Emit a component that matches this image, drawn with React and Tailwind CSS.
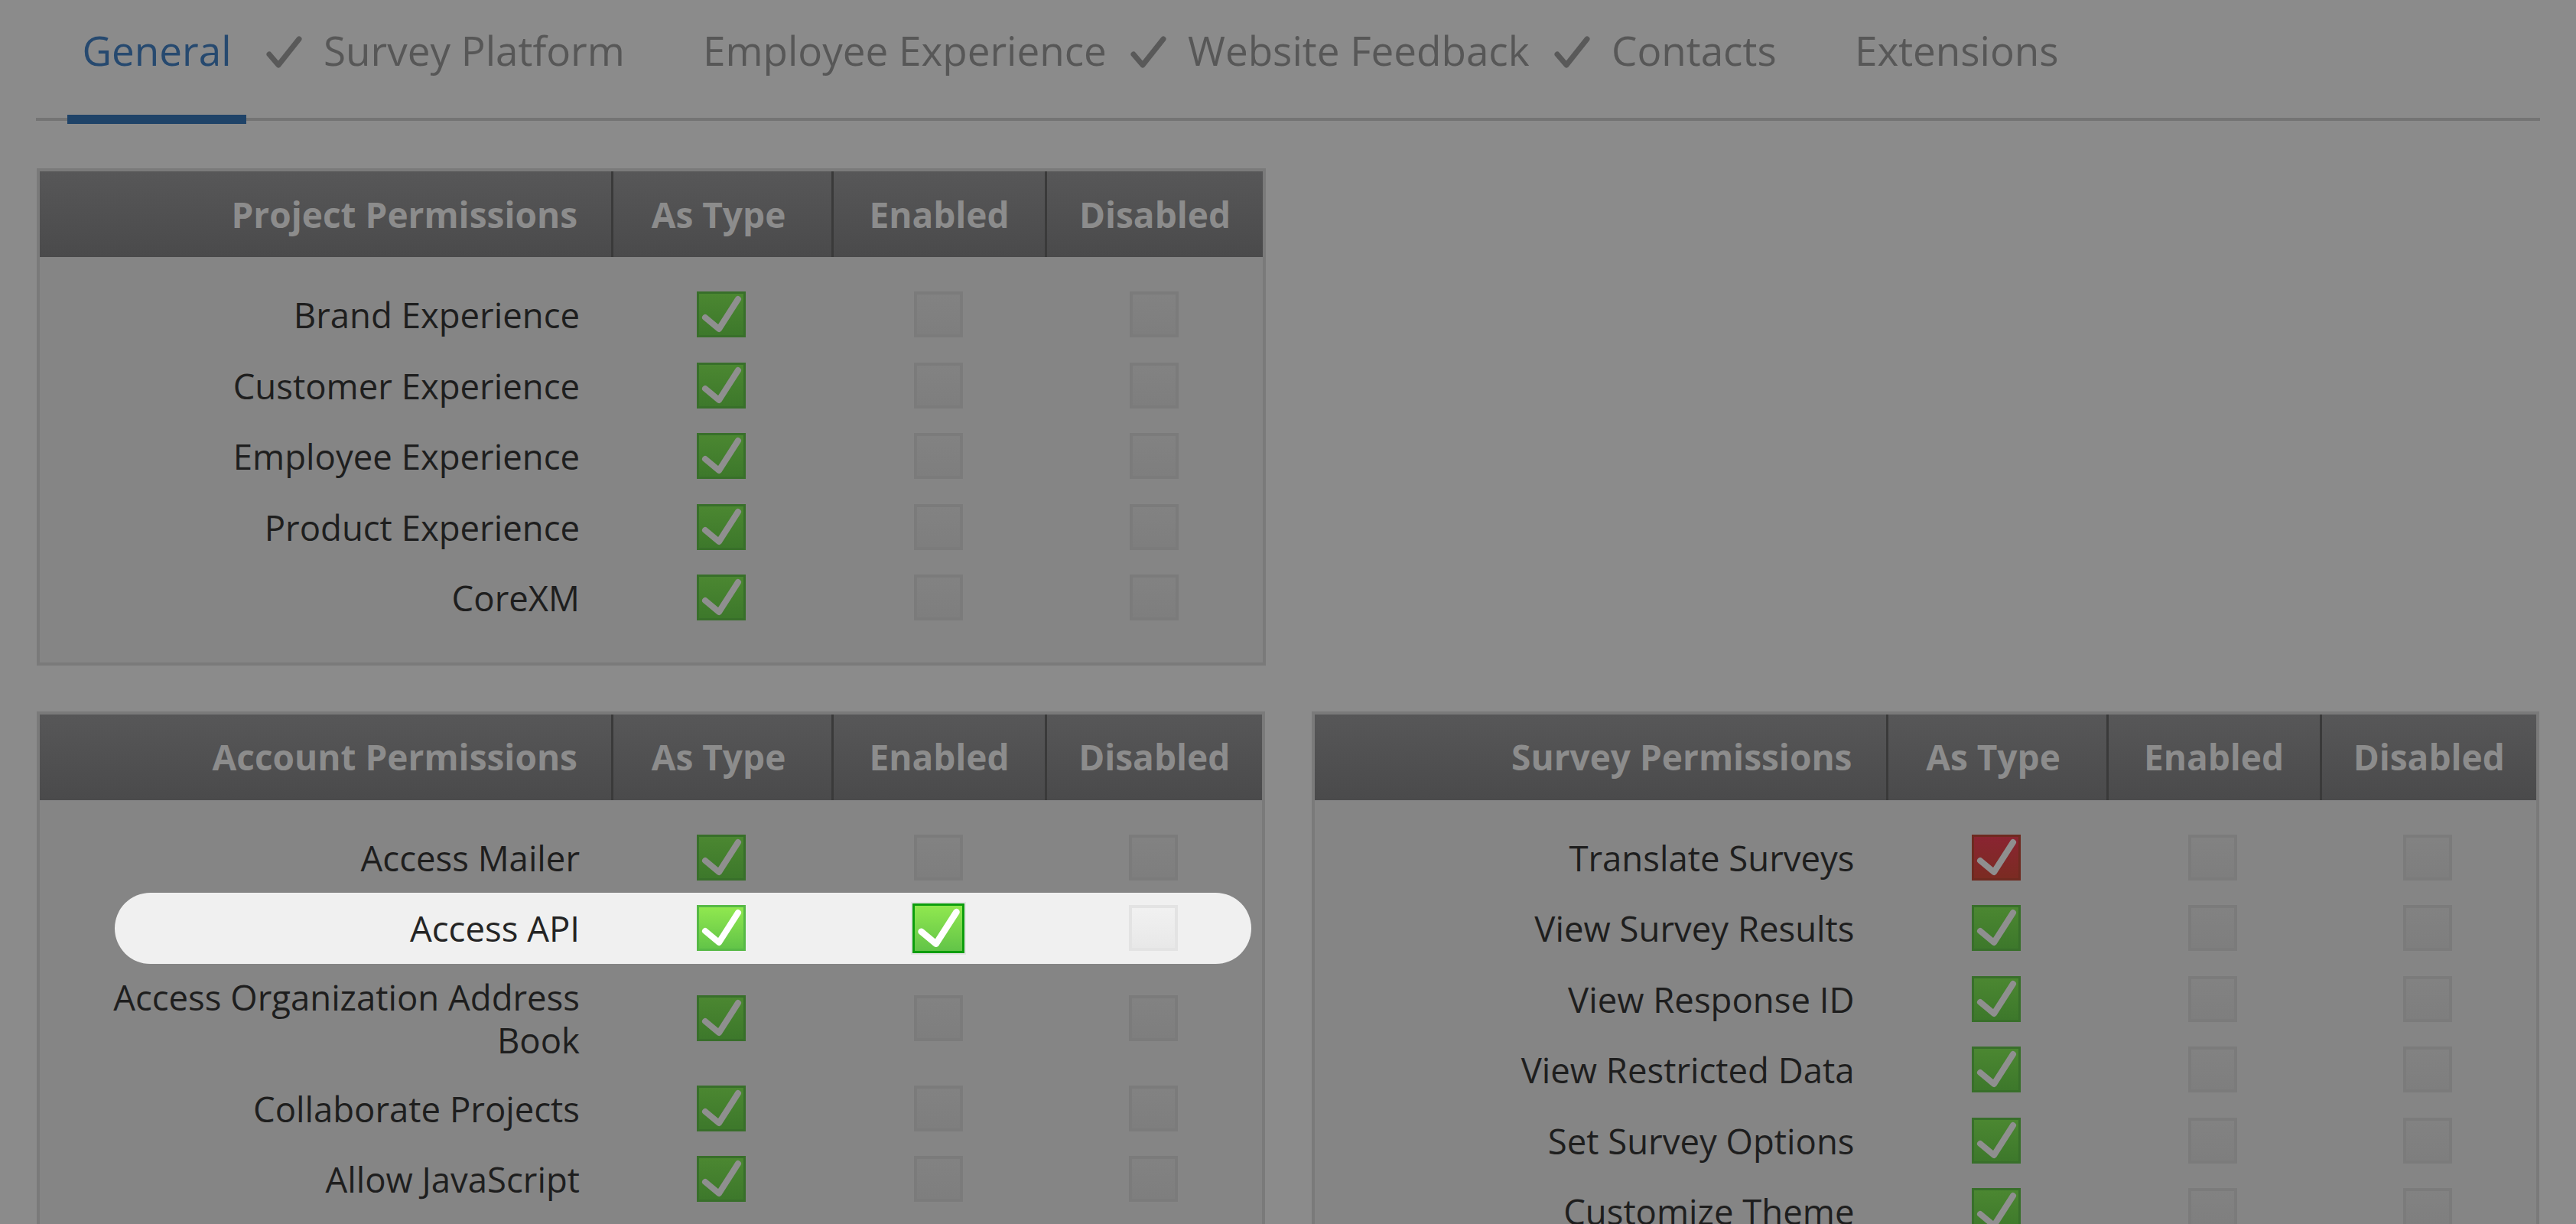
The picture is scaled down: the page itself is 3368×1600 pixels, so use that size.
import React from "react";

const projectRows = [
  { label: "Brand Experience", asType: "green" },
  { label: "Customer Experience", asType: "green" },
  { label: "Employee Experience", asType: "green" },
  { label: "Product Experience", asType: "green" },
  { label: "CoreXM", asType: "green" },
];

const surveyRows = [
  { label: "Translate Surveys", asType: "red" },
  { label: "View Survey Results", asType: "green" },
  { label: "View Response ID", asType: "green" },
  { label: "View Restricted Data", asType: "green" },
  { label: "Set Survey Options", asType: "green" },
  { label: "Customize Theme", asType: "green" },
];

// checkbox looks
const boxStyles = {
  green:
    "w-[64px] h-[60px] border-[3px] border-[#386f2a] bg-linear-to-b from-[#4b8731] to-[#3d782b]",
  red:
    "w-[64px] h-[60px] border-[3px] border-[#6e2a20] bg-linear-to-b from-[#8a2431] to-[#7b2b22]",
  empty:
    "w-[64px] h-[60px] border-[4px] border-[#7b7b7b] bg-linear-to-b from-[#828282] to-[#7e7e7e]",
  bright:
    "w-[64px] h-[60px] border-[3px] border-[#57b946] bg-linear-to-b from-[#90e84f] to-[#62c448]",
  focus:
    "w-[68px] h-[65px] border-[3px] border-[#0c9e0c] bg-linear-to-b from-[#90e84f] to-[#62c448] shadow-[0_0_0_2px_#e3e3e3]",
  light:
    "w-[64px] h-[60px] border-[4px] border-[#e3e3e3] bg-linear-to-b from-[#f1f1f1] to-[#e8e8e8]",
};

function Box({ kind }) {
  const checked = kind !== "empty" && kind !== "light";
  const white = kind === "bright" || kind === "focus";

  return (
    <div className={`${boxStyles[kind]} flex items-center justify-center`}>
      {checked && (
        <svg viewBox="0 0 58 54" className="h-full w-full">
          <path
            d="M8 31 L26 46 L51 7"
            fill="none"
            stroke={white ? "#ffffff" : "#8f8f8f"}
            strokeWidth="8"
            strokeLinecap="round"
            strokeLinejoin="round"
          />
        </svg>
      )}
    </div>
  );
}

const cols = "grid grid-cols-[747px_288px_279px_1fr]";

function Header({ title }) {
  return (
    <div
      className={`${cols} h-[112px] bg-linear-to-b from-[#575758] to-[#4a4a4b] text-[46px] font-bold text-[#8c8c8c]`}
    >
      <div className="flex items-center justify-end pr-[44px]">{title}</div>
      <div className="flex items-center justify-center border-l-[3px] border-[#3a3a3a] pr-[10px]">
        As Type
      </div>
      <div className="flex items-center justify-center border-l-[3px] border-[#3a3a3a]">
        Enabled
      </div>
      <div className="flex items-center justify-center border-l-[3px] border-[#3a3a3a]">
        Disabled
      </div>
    </div>
  );
}

function Row({ label, asType, tall }) {
  return (
    <div
      className={`${cols} items-center ${tall ? "h-[143px]" : "h-[92.5px]"}`}
    >
      <div className="pr-[41px] text-right text-[45.5px] leading-[56px] text-[#1e1e1e]">
        {label}
      </div>
      <div className="flex justify-center">
        <Box kind={asType} />
      </div>
      <div className="flex justify-center">
        <Box kind="empty" />
      </div>
      <div className="flex justify-center">
        <Box kind="empty" />
      </div>
    </div>
  );
}

function Table({ title, children }) {
  return (
    <div className="w-[1607px] border-4 border-[#7a7a7a] bg-[#858585]">
      <Header title={title} />
      <div className="pt-[29px] pb-[38px]">{children}</div>
    </div>
  );
}

// tab check mark
function Tick({ ml }) {
  return (
    <div className={`${ml} shrink-0 pt-[47px]`}>
      <svg viewBox="0 0 47 42" className="h-[42px] w-[47px]">
        <path
          d="M4 24 L16 38 L43 4"
          fill="none"
          stroke="#595959"
          strokeWidth="7"
          strokeLinecap="round"
          strokeLinejoin="round"
        />
      </svg>
    </div>
  );
}

export default function App() {
  return (
    <div className="h-[1600px] w-[3368px] overflow-hidden bg-[#8b8b8b] font-['Open_Sans','Liberation_Sans',sans-serif]">

      {/* TABS */}

      <div className="mx-[47px] flex h-[158px] items-start whitespace-nowrap border-b-4 border-[#747474] text-[53px] leading-[72px] text-[#575757]">

        <div className="ml-[41px] h-[162px] w-[234px] shrink-0 border-b-[12px] border-[#1f4368] pt-[30px] text-center text-[#26496f]">
          General
        </div>

        <Tick ml="ml-[26px]" />

        <div className="ml-[28px] w-[393px] shrink-0 pt-[30px]">
          Survey Platform
        </div>

        <div className="ml-[103px] w-[533px] shrink-0 pt-[30px]">
          Employee Experience
        </div>

        <Tick ml="ml-[26px]" />

        <div className="ml-[28px] w-[453px] shrink-0 pt-[30px]">
          Website Feedback
        </div>

        <Tick ml="ml-[26px]" />

        <div className="ml-[28px] w-[217px] shrink-0 pt-[30px]">
          Contacts
        </div>

        <div className="ml-[101px] w-[264px] shrink-0 pt-[30px]">
          Extensions
        </div>

      </div>

      {/* TABLES */}

      <div className="flex flex-col gap-[60px] px-[48px] pt-[62px]">

        <Table title="Project Permissions">
          {projectRows.map((r) => (
            <Row key={r.label} label={r.label} asType={r.asType} />
          ))}
        </Table>

        <div className="flex gap-[61px]">

          <Table title="Account Permissions">

            <Row label="Access Mailer" asType="green" />

            {/* HIGHLIGHTED ROW */}

            <div className="ml-[98px] mr-[14px] grid h-[92.5px] grid-cols-[649px_288px_279px_1fr] items-center rounded-full bg-[#f0f0f0]">
              <div className="pr-[41px] text-right text-[45.5px] leading-[56px] text-[#242424]">
                Access API
              </div>
              <div className="flex justify-center">
                <Box kind="bright" />
              </div>
              <div className="flex justify-center">
                <Box kind="focus" />
              </div>
              <div className="flex justify-start pl-[110px]">
                <Box kind="light" />
              </div>
            </div>

            <Row
              tall
              asType="green"
              label={
                <>
                  Access Organization Address
                  <br />
                  Book
                </>
              }
            />

            <Row label="Collaborate Projects" asType="green" />

            <Row label="Allow JavaScript" asType="green" />

          </Table>

          <Table title="Survey Permissions">
            {surveyRows.map((r) => (
              <Row key={r.label} label={r.label} asType={r.asType} />
            ))}
          </Table>

        </div>

      </div>

    </div>
  );
}
